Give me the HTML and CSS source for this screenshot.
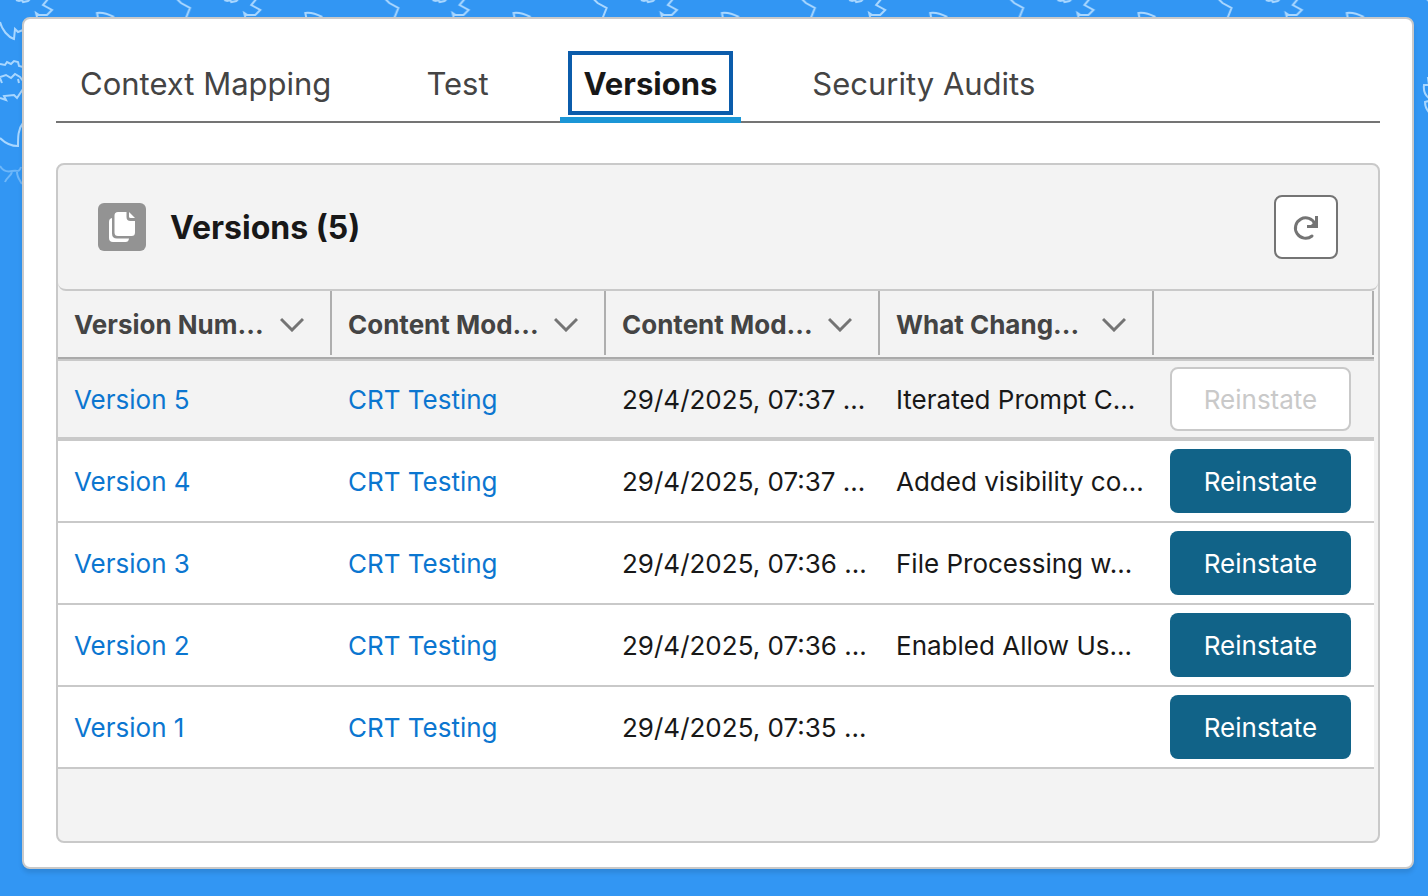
FILE: index.html
```html
<!DOCTYPE html>
<html lang="en">
  <head>
    <meta charset="UTF-8" />
    <meta name="viewport" content="width=device-width, initial-scale=1.0" />
    <title>Versions</title>
    <link rel="stylesheet" href="styles.css">
  </head>
  <body>
    <!-- background doodles -->
    <svg class="doodle" aria-hidden="true">
      <defs>
        <pattern id="birds" width="208.3" height="18" patternUnits="userSpaceOnUse">
          <path d="M16 0l3 1 3-1 1 2 5-1 2-2M48 -1l-5 6 9 5-5 5-8 0-3-2 1 4M98 18l-1-5c6-1 11 1 17 4M177 -1l4 4 9 5-4 10" />
        </pattern>
      </defs>
      <rect width="100%" height="18" fill="url(#birds)" stroke="none" />
      <path d="M0 22c2 8 8 15 14 17l1-10 3 3 5-2M0 64l5 1 2-3 4 2 3-3 4 1 1 4 4 1M0 77l6-2 5 3 4-4 5 3 3 4M0 78l2 5M18 79l1 4M0 98l6 2-2-4 10-1 3 3 4-6 2-3M0 138c5 5 11 8 18 8 0-9 0-17 5-23" />
      <path class="faded" d="M0 166c3 5 8 6 12 5 5-1 7 2 9-4M12 172c-1 4-5 5-7 10M17 172c0 5 2 7 5 12" />
    </svg>
    <svg class="doodle feather" width="14" height="60" viewBox="0 0 14 60" aria-hidden="true">
      <path d="M14 4l-4 0 1 7-5 0c-1 8 2 12 8 15l-7 2c0 7 4 11 8 14l-3 2c0 3 1 6 3 9" />
    </svg>

    <main class="card">
      <ul class="tabs">
        <li class="tab"><a href="#">Context Mapping</a></li>
        <li class="tab"><a href="#">Test</a></li>
        <li class="tab active"><a href="#">Versions</a></li>
        <li class="tab"><a href="#">Security Audits</a></li>
      </ul>

      <section class="panel">
        <header class="panel-header">
          <svg class="panel-icon" width="48" height="48" viewBox="0 0 48 48" aria-hidden="true">
            <rect width="48" height="48" rx="6" fill="#939393" />
            <path fill="#fff" d="M14 15v15.500q0 5 5 5h12q-.4 3.500-3.500 3.500H15q-4 0-4-4V19q0-3.500 3-4z" />
            <path fill="#fff" d="M20 9h8.500v5q0 4 4 4H37v11.500q0 3.500-3.500 3.500H20q-3.500 0-3.500-3.500v-17Q16.500 9 20 9z" />
            <path fill="#fff" d="M31 9l6 6h-4.500q-1.500 0-1.500-1.500z" />
          </svg>
          <h2>Versions (5)</h2>
          <button class="refresh" type="button" aria-label="Refresh">
            <svg width="60" height="60" viewBox="2 2 60 60">
              <path d="M38 41a10.200 10.200 0 1 1 3-12" stroke-linecap="round" />
              <path d="M42.500 21v10.500H33" />
              <path d="M36 31l6-6v6z" stroke="none" fill="#747474" />
            </svg>
          </button>
        </header>

        <table>
          <thead>
            <tr>
              <th><div class="head">Version Num...<svg class="chevron" width="24" height="16"><path d="M1 3l11 11 11-11" /></svg></div></th>
              <th><div class="head">Content Mod...<svg class="chevron" width="24" height="16"><path d="M1 3l11 11 11-11" /></svg></div></th>
              <th><div class="head">Content Mod...<svg class="chevron" width="24" height="16"><path d="M1 3l11 11 11-11" /></svg></div></th>
              <th><div class="head">What Chang...<svg class="chevron" width="24" height="16"><path d="M1 3l11 11 11-11" /></svg></div></th>
              <th class="action"><div class="head"></div></th>
            </tr>
          </thead>
          <tbody>
            <tr class="current">
              <td><a href="#">Version 5</a></td>
              <td><a href="#">CRT Testing</a></td>
              <td>29/4/2025, 07:37 ...</td>
              <td>Iterated Prompt C...</td>
              <td><button class="reinstate" type="button" disabled>Reinstate</button></td>
            </tr>
            <tr>
              <td><a href="#">Version 4</a></td>
              <td><a href="#">CRT Testing</a></td>
              <td>29/4/2025, 07:37 ...</td>
              <td>Added visibility co...</td>
              <td><button class="reinstate" type="button">Reinstate</button></td>
            </tr>
            <tr>
              <td><a href="#">Version 3</a></td>
              <td><a href="#">CRT Testing</a></td>
              <td>29/4/2025, 07:36 ...</td>
              <td>File Processing w...</td>
              <td><button class="reinstate" type="button">Reinstate</button></td>
            </tr>
            <tr>
              <td><a href="#">Version 2</a></td>
              <td><a href="#">CRT Testing</a></td>
              <td>29/4/2025, 07:36 ...</td>
              <td>Enabled Allow Us...</td>
              <td><button class="reinstate" type="button">Reinstate</button></td>
            </tr>
            <tr>
              <td><a href="#">Version 1</a></td>
              <td><a href="#">CRT Testing</a></td>
              <td>29/4/2025, 07:35 ...</td>
              <td></td>
              <td><button class="reinstate" type="button">Reinstate</button></td>
            </tr>
          </tbody>
        </table>
      </section>
    </main>
  </body>
</html>
```
FILE: styles.css
```css
* {
  margin: 0;
  padding: 0;
  box-sizing: border-box;
}

body {
  position: relative;
  padding: 17px 14px 27px 22px;
  background: #3296f3;
  color: #181818;
  font-family: Inter, "Liberation Sans", sans-serif;
  font-size: 26px;
}

a {
  color: #0b76d0;
  text-decoration: none;
}

/* background */
.doodle {
  position: absolute;
  top: 0;
  left: 0;
  width: 100%;
  height: 200px;
  fill: none;
  stroke: #a9d7ff;
  stroke-width: 2;
}

.doodle .faded {
  opacity: 0.5;
}

.doodle.feather {
  top: 74px;
  left: auto;
  right: -4px;
  width: 14px;
  height: 60px;
}

html {
  overflow-x: hidden;
}

.card {
  position: relative;
  padding: 32px 32px 24px;
  background: #fff;
  border: 2px solid #c9c9c9;
  border-radius: 8px;
  box-shadow: 0 4px 4px rgba(0, 0, 0, 0.1);
}

/* tabs */
.tabs {
  display: flex;
  gap: 47px;
  height: 72px;
  margin-bottom: 40px;
  border-bottom: 2px solid #747474;
  list-style: none;
}

.tab {
  position: relative;
  padding: 0 8px;
}

.tab a {
  display: block;
  padding: 2px 16px 0;
  color: #444;
  font-size: 31px;
  line-height: 62px;
}

.tab.active a {
  color: #181818;
  font-weight: 700;
  outline: 4px solid #0b5cab;
  outline-offset: -4px;
}

.tab.active::after {
  content: "";
  position: absolute;
  left: 0;
  right: 0;
  bottom: -2px;
  height: 6px;
  background: #1b96d6;
}

/* panel */
.panel {
  padding-bottom: 72px;
  background: #f3f3f3;
  border: 2px solid #c9c9c9;
  border-radius: 8px;
}

.panel-header {
  display: flex;
  align-items: center;
  gap: 24px;
  padding: 30px 40px;
  border-bottom: 2px solid #c9c9c9;
  border-radius: 8px;
}

.panel-header h2 {
  flex: 1;
  padding-top: 2px;
  font-size: 32px;
  line-height: 40px;
}

.refresh {
  width: 64px;
  height: 64px;
  background: #fff;
  border: 2px solid #747474;
  border-radius: 8px;
}

.refresh svg {
  display: block;
  fill: none;
  stroke: #747474;
  stroke-width: 3;
}

/* table */
table {
  width: calc(100% - 4px);
  table-layout: fixed;
  border-spacing: 0;
}

th {
  padding-bottom: 2px;
  border-bottom: 2px solid #aaa;
  color: #444;
  text-align: left;
}

th.action {
  width: 220px;
}

.head {
  display: flex;
  align-items: center;
  justify-content: space-between;
  height: 64px;
  padding: 2px 26px 0 16px;
  border-right: 2px solid #aeaeae;
  white-space: nowrap;
}

.chevron {
  fill: none;
  stroke: #747474;
  stroke-width: 3;
}

td {
  height: 82px;
  padding: 0 16px;
  background: #fff;
  border-bottom: 2px solid #c9c9c9;
  white-space: nowrap;
}

.current td {
  background: #f3f3f3;
  border-top: 2px solid #c9c9c9;
  border-bottom-width: 4px;
}

.reinstate {
  display: block;
  width: 181px;
  height: 64px;
  background: #116388;
  border: 0;
  border-radius: 8px;
  color: #fff;
  font: inherit;
}

.reinstate:disabled {
  background: #fff;
  border: 2px solid #c9c9c9;
  color: #c9c9c9;
}
```
